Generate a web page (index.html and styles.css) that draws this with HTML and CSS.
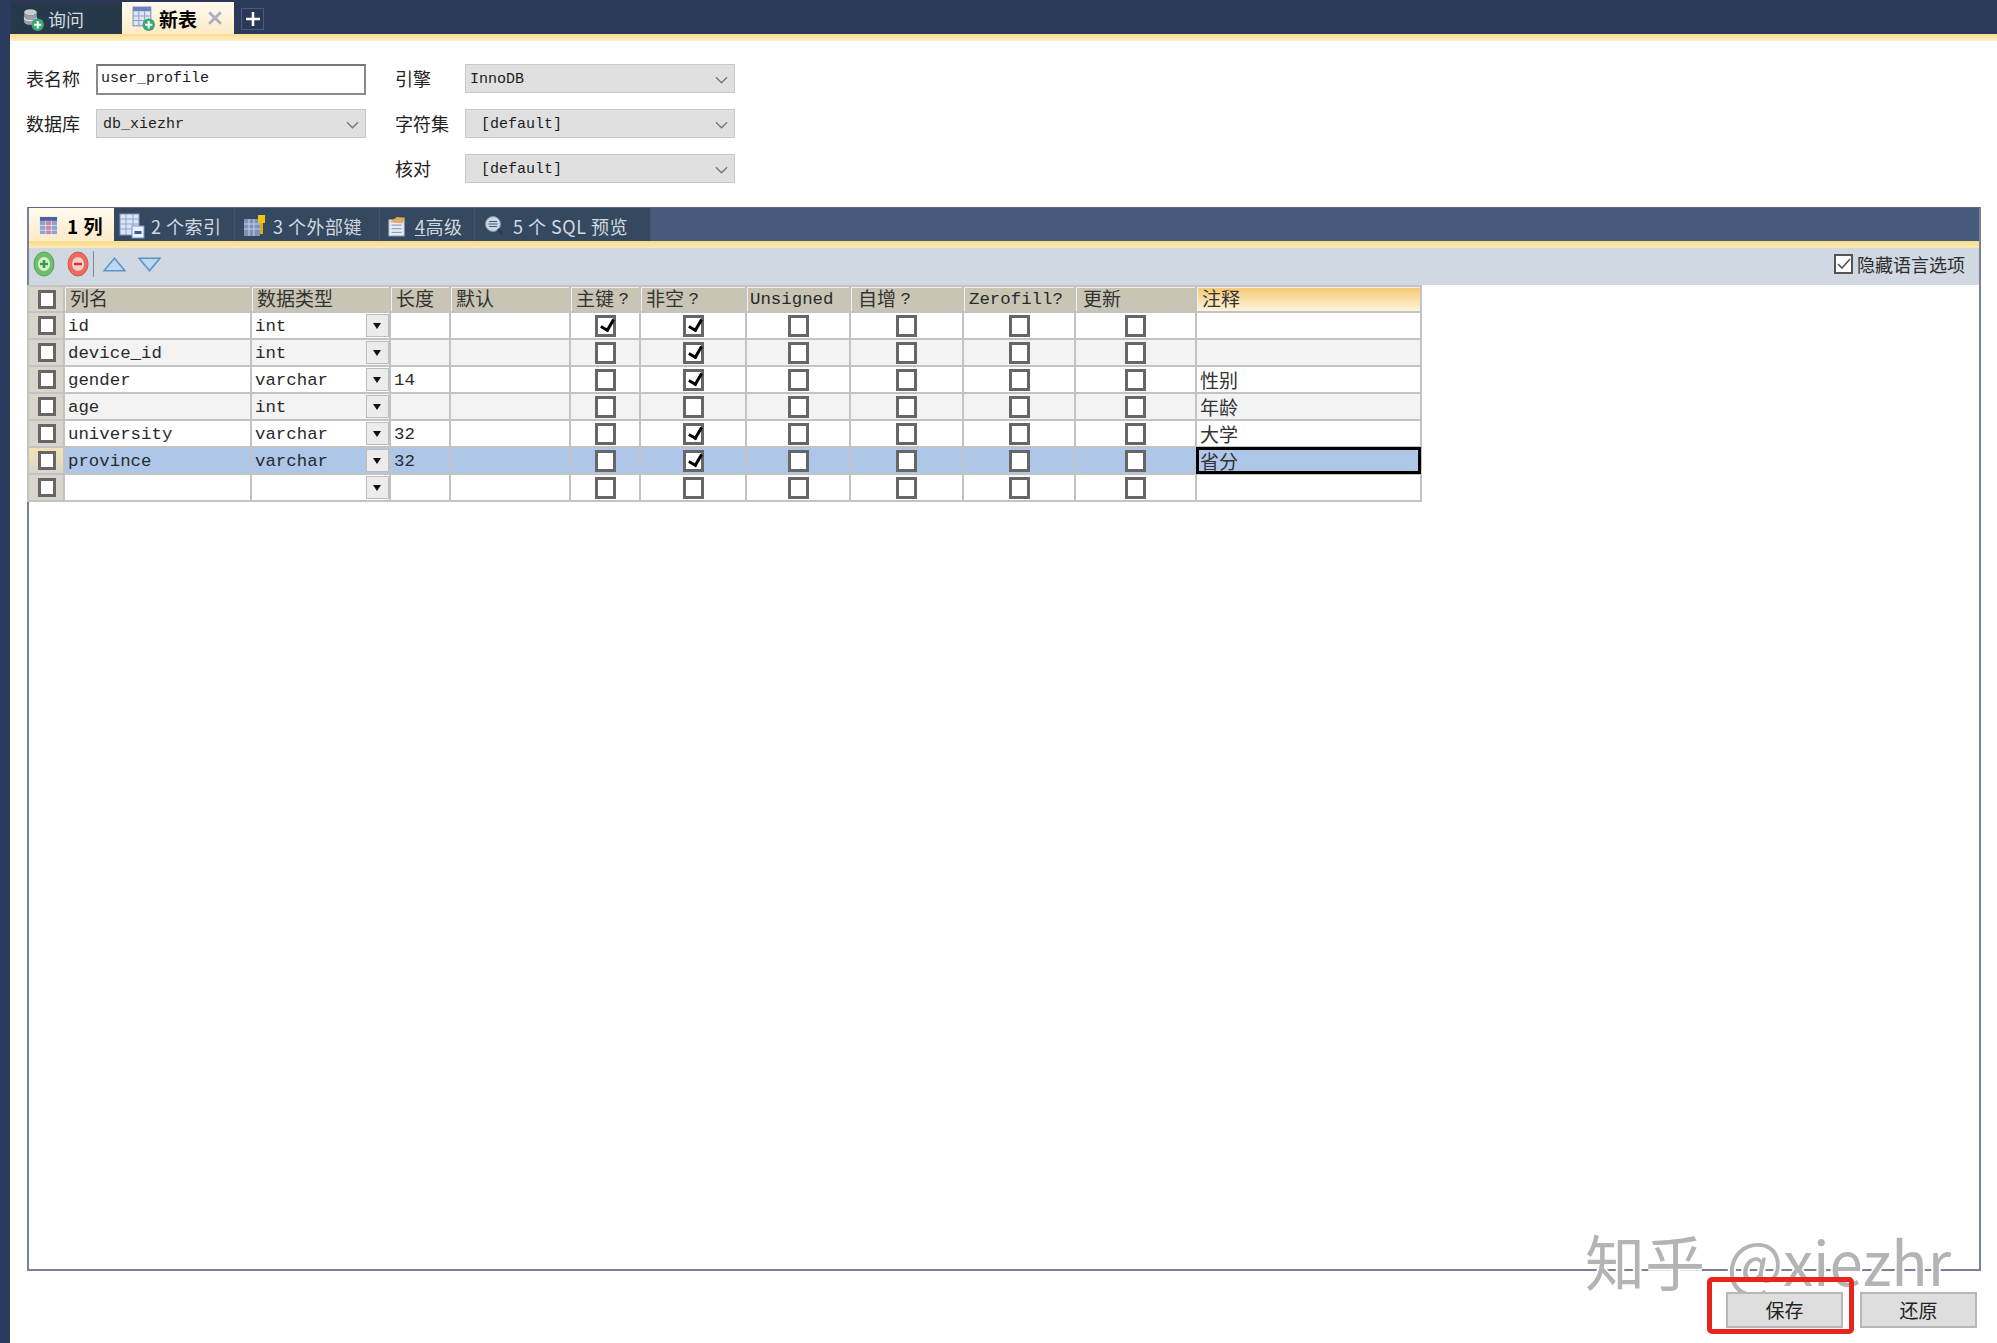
FILE: index.html
```html
<!DOCTYPE html>
<html lang="zh-CN">
<head>
<meta charset="utf-8">
<title>新表</title>
<link rel="stylesheet" href="styles.css">
</head>
<body>
<div class="app">
  <aside class="edge"></aside>
  <main class="main">
    <nav class="doc-tabs">
      <div class="doc-tab doc-tab-idle">
        <svg class="ico-doc" viewBox="0 0 22 24"><ellipse cx="9" cy="6" rx="6" ry="3" fill="#c9ced2"/><path d="M3 6v9c0 2 3 3 6 3s6-1 6-3V6c0 2-3 3-6 3S3 8 3 6z" fill="#9aa2a8"/><path d="M3 11c0 2 3 3 6 3s6-1 6-3" stroke="#e4e7ea" fill="none"/><circle cx="16" cy="18" r="6" fill="#3aa776"/><path d="M16 14.5v7M12.500 18h7" stroke="#fff" stroke-width="2"/></svg>
        <span>询问</span>
      </div>
      <div class="doc-tab doc-tab-on">
        <svg class="ico-doc" viewBox="0 0 22 24"><rect x="1" y="1" width="17" height="18" fill="#dfe6f3" stroke="#7c8fc0"/><rect x="1" y="1" width="17" height="4" fill="#6d83c0"/><path d="M6.500 5v14M12 5v14M1 9.500h17M1 14h17" stroke="#8ea2d0"/><circle cx="16" cy="18" r="6" fill="#3aa776"/><path d="M16 14.500v7M12.500 18h7" stroke="#fff" stroke-width="2"/></svg>
        <b class="doc-tab-title">新表</b>
        <svg class="doc-close" viewBox="0 0 12 12"><path d="M1 1l10 10M11 1L1 11" stroke="#a9b2c4" stroke-width="2.500"/></svg>
      </div>
      <button class="doc-add" type="button"><svg viewBox="0 0 14 14"><path d="M7 0v14M0 7h14" stroke="#fff" stroke-width="2.500"/></svg></button>
    </nav>
    <div class="strip"></div>

    <form class="meta">
      <label class="lbl">表名称</label>
      <div class="field field-input">user_profile</div>
      <label class="lbl lbl-r">引擎</label>
      <div class="field combo combo-a"><span>InnoDB</span><svg viewBox="0 0 14 8"><path d="M1 1l6 6 6-6" fill="none" stroke="#777" stroke-width="1.500"/></svg></div>

      <label class="lbl">数据库</label>
      <div class="field combo combo-b"><span>db_xiezhr</span><svg viewBox="0 0 14 8"><path d="M1 1l6 6 6-6" fill="none" stroke="#777" stroke-width="1.500"/></svg></div>
      <label class="lbl lbl-r">字符集</label>
      <div class="field combo combo-in"><span>[default]</span><svg viewBox="0 0 14 8"><path d="M1 1l6 6 6-6" fill="none" stroke="#777" stroke-width="1.500"/></svg></div>

      <span></span><span></span>
      <label class="lbl lbl-r">核对</label>
      <div class="field combo combo-in"><span>[default]</span><svg viewBox="0 0 14 8"><path d="M1 1l6 6 6-6" fill="none" stroke="#777" stroke-width="1.500"/></svg></div>
    </form>

    <section class="panel">
      <nav class="ptabs">
        <div class="ptab ptab-on w1">
          <svg class="ico19" viewBox="0 0 20 20"><rect x="1" y="1" width="18" height="18" fill="#8fa2d6"/><rect x="1" y="1" width="18" height="4" fill="#4d5f9c"/><rect x="7" y="5" width="6" height="14" fill="#c98aa0"/><path d="M7 5v14M13 5v14M1 10h18M1 15h18" stroke="#eef" stroke-width=".7"/></svg>
          <b>1 列</b>
        </div>
        <div class="ptab w2">
          <svg class="ico26" viewBox="0 0 26 26"><rect x="1" y="1" width="19" height="21" fill="#dfe6f2" stroke="#7b93c4"/><path d="M1 6h19M1 11h19M1 16h19M7 1v21M14 1v21" stroke="#8ba2cf"/><rect x="13" y="13" width="12" height="12" fill="#eef2f8" stroke="#7b93c4"/><rect x="15.500" y="18" width="7" height="3" fill="#2d5fa8"/></svg>
          <span>2 个索引</span>
        </div>
        <div class="ptab w3">
          <svg class="ico24" viewBox="0 0 24 24"><rect x="1" y="5" width="16" height="17" fill="#7d93b8"/><path d="M6 5v17M11 5v17M1 10h16M1 15h16" stroke="#c4d0e2"/><rect x="15" y="1" width="7" height="8" fill="#f0c419"/><rect x="17" y="9" width="3" height="11" fill="#e0ad10"/></svg>
          <span>3 个外部键</span>
        </div>
        <div class="ptab w4">
          <svg class="ico22" viewBox="0 0 22 24"><rect x="2" y="5" width="17" height="18" fill="#e8ebf0" stroke="#8a9ab5"/><path d="M5 11h11M5 15h11M5 19h11" stroke="#6f88b5"/><path d="M3 8l8-6 9 1-3 6z" fill="#e0a95c"/></svg>
          <span><u>4</u>高级</span>
        </div>
        <div class="ptab w5">
          <svg class="ico20" viewBox="0 0 20 22"><circle cx="9" cy="9" r="7.500" fill="#cfd6df" stroke="#8794a5"/><path d="M5 6.500h8M4.500 9h9M5 11.500h8" stroke="#3f5a8a" stroke-width="1.200"/><path d="M14 14l4 5" stroke="#2c3c50" stroke-width="2.500"/></svg>
          <span>5 个 SQL 预览</span>
        </div>
      </nav>
      <div class="strip strip-thin"></div>
      <div class="tools">
        <svg class="tool" viewBox="0 0 22 26"><ellipse cx="11" cy="13" rx="10" ry="12" fill="#6cc06a" stroke="#5a9e5a"/><ellipse cx="11" cy="13" rx="6" ry="7" fill="#d8f0d2"/><path d="M11 9v8M7 13h8" stroke="#3d9a45" stroke-width="2.500"/></svg>
        <svg class="tool" viewBox="0 0 22 26"><ellipse cx="11" cy="13" rx="10" ry="12" fill="#ee6a5e" stroke="#cc5a50"/><ellipse cx="11" cy="13" rx="6" ry="7" fill="#f8cfc8"/><path d="M7 13h8" stroke="#d0392e" stroke-width="2.500"/></svg>
        <i class="tool-sep"></i>
        <svg class="tool-arrow" viewBox="0 0 22 14"><path d="M11 1l10 12H1z" fill="#bcd8f2" stroke="#5b94c8" stroke-width="1.500"/></svg>
        <svg class="tool-arrow" viewBox="0 0 22 14"><path d="M11 13L21 1H1z" fill="#bcd8f2" stroke="#5b94c8" stroke-width="1.500"/></svg>
        <label class="hide-lang"><span class="hide-box"><svg viewBox="0 0 14 12"><path d="M1 6l4 4 8-9" fill="none" stroke="#555" stroke-width="1.600"/></svg></span>隐藏语言选项</label>
      </div>

      <table class="grid">
        <colgroup>
          <col class="c0"><col class="c1"><col class="c2"><col class="c3"><col class="c4"><col class="c5"><col class="c6"><col class="c7"><col class="c8"><col class="c9"><col class="c10"><col class="c11">
        </colgroup>
        <thead>
          <tr>
            <th class="rh"><i class="cb"></i></th>
            <th><span class="cn">列名</span></th>
            <th><span class="cn">数据类型</span></th>
            <th><span class="cn">长度</span></th>
            <th><span class="cn">默认</span></th>
            <th><span class="cn">主键</span> ?</th>
            <th><span class="cn">非空</span> ?</th>
            <th class="th-tight">Unsigned</th>
            <th class="th-wide"><span class="cn">自增</span> ?</th>
            <th>Zerofill?</th>
            <th class="th-wide"><span class="cn">更新</span></th>
            <th class="th-sort"><span class="cn">注释</span></th>
          </tr>
        </thead>
        <tbody>
          <tr>
            <td class="rh"><i class="cb"></i></td><td>id</td>
            <td class="ty">int<i class="dd"></i></td><td></td><td></td>
            <td class="ck"><i class="cb on"></i></td><td class="ck"><i class="cb on"></i></td>
            <td class="ck"><i class="cb"></i></td><td class="ck"><i class="cb"></i></td><td class="ck"><i class="cb"></i></td><td class="ck"><i class="cb"></i></td><td></td>
          </tr>
          <tr>
            <td class="rh"><i class="cb"></i></td><td>device_id</td>
            <td class="ty">int<i class="dd"></i></td><td></td><td></td>
            <td class="ck"><i class="cb"></i></td><td class="ck"><i class="cb on"></i></td>
            <td class="ck"><i class="cb"></i></td><td class="ck"><i class="cb"></i></td><td class="ck"><i class="cb"></i></td><td class="ck"><i class="cb"></i></td><td></td>
          </tr>
          <tr>
            <td class="rh"><i class="cb"></i></td><td>gender</td>
            <td class="ty">varchar<i class="dd"></i></td><td>14</td><td></td>
            <td class="ck"><i class="cb"></i></td><td class="ck"><i class="cb on"></i></td>
            <td class="ck"><i class="cb"></i></td><td class="ck"><i class="cb"></i></td><td class="ck"><i class="cb"></i></td><td class="ck"><i class="cb"></i></td><td><span class="cn">性别</span></td>
          </tr>
          <tr>
            <td class="rh"><i class="cb"></i></td><td>age</td>
            <td class="ty">int<i class="dd"></i></td><td></td><td></td>
            <td class="ck"><i class="cb"></i></td><td class="ck"><i class="cb"></i></td>
            <td class="ck"><i class="cb"></i></td><td class="ck"><i class="cb"></i></td><td class="ck"><i class="cb"></i></td><td class="ck"><i class="cb"></i></td><td><span class="cn">年龄</span></td>
          </tr>
          <tr>
            <td class="rh"><i class="cb"></i></td><td>university</td>
            <td class="ty">varchar<i class="dd"></i></td><td>32</td><td></td>
            <td class="ck"><i class="cb"></i></td><td class="ck"><i class="cb on"></i></td>
            <td class="ck"><i class="cb"></i></td><td class="ck"><i class="cb"></i></td><td class="ck"><i class="cb"></i></td><td class="ck"><i class="cb"></i></td><td><span class="cn">大学</span></td>
          </tr>
          <tr class="sel">
            <td class="rh"><i class="cb"></i></td><td>province</td>
            <td class="ty">varchar<i class="dd"></i></td><td>32</td><td></td>
            <td class="ck"><i class="cb"></i></td><td class="ck"><i class="cb on"></i></td>
            <td class="ck"><i class="cb"></i></td><td class="ck"><i class="cb"></i></td><td class="ck"><i class="cb"></i></td><td class="ck"><i class="cb"></i></td><td class="cur"><span class="cn">省分</span></td>
          </tr>
          <tr>
            <td class="rh"><i class="cb"></i></td><td></td>
            <td class="ty"><i class="dd"></i></td><td></td><td></td>
            <td class="ck"><i class="cb"></i></td><td class="ck"><i class="cb"></i></td>
            <td class="ck"><i class="cb"></i></td><td class="ck"><i class="cb"></i></td><td class="ck"><i class="cb"></i></td><td class="ck"><i class="cb"></i></td><td></td>
          </tr>
        </tbody>
      </table>
    </section>

    <footer class="actions">
      <div class="watermark">知乎 @xiezhr</div>
      <button class="btn" type="button">保存<i class="mark"></i></button>
      <button class="btn" type="button">还原</button>
    </footer>
  </main>
</div>
</body>
</html>
```
FILE: styles.css
```css
* { box-sizing: border-box; }
html, body { margin: 0; padding: 0; background: #fff; }
body {
  width: 1997px;
  height: 1343px;
  overflow: hidden;
  font-family: "Liberation Mono", "Noto Sans CJK SC", monospace;
  color: #222;
}
.app { display: flex; height: 100%; }
.edge { width: 10px; background: #2b3b5e; flex: none; }
.main { flex: 1; display: flex; flex-direction: column; min-width: 0; position: relative; }

/* document tabs */
.doc-tabs {
  height: 34px;
  background: #2b3858;
  display: flex;
  align-items: flex-end;
  padding-left: 1px;
  font-family: "Noto Sans CJK SC", sans-serif;
}
.doc-tab { display: flex; align-items: center; height: 31px; }
.doc-tab-idle { width: 111px; background: #25394a; color: #d6dade; font-size: 18px; padding-left: 10px; gap: 4px; }
.doc-tab-on {
  width: 112px; height: 32px; padding-left: 10px; gap: 4px;
  background: linear-gradient(#fffaf0, #fdebc6);
  color: #000;
  font-size: 19px;
}
.doc-tab-title { font-weight: 700; }
.doc-close { width: 14px; height: 14px; margin-left: 7px; }
.doc-add {
  width: 23px; height: 22px; margin: 0 0 4px 7px; padding: 0;
  background: #2b3858; border: 1px solid #4a5a80;
  display: flex; align-items: center; justify-content: center;
}
.doc-add svg { width: 14px; height: 14px; }
.strip { height: 7px; background: linear-gradient(#fbdc8e, #fdf0cc); flex: none; }
.strip-thin { background: linear-gradient(#f9dc8c, #fce9b4); }
.ico-doc { width: 23px; height: 25px; flex: none; }
.ico19 { width: 19px; height: 19px; flex: none; }
.ico20 { width: 20px; height: 22px; flex: none; }
.ico22 { width: 20px; height: 22px; flex: none; }
.ico24 { width: 24px; height: 24px; flex: none; }
.ico26 { width: 26px; height: 26px; flex: none; }

/* table meta form */
.meta {
  margin: 23px 0 0 16px;
  display: grid;
  grid-template-columns: 70px 270px 99px 270px;
  grid-auto-rows: 29px;
  row-gap: 16px;
  align-items: start;
}
.lbl { font-family: "Noto Sans CJK SC", sans-serif; font-size: 18px; line-height: 29px; color: #222; }
.lbl-r { padding-left: 29px; }
.field {
  height: 29px;
  display: flex; align-items: center;
  font-size: 15px;
  color: #1c1c1c;
}
.field-input { height: 31px; background: #fff; border: 2px solid #8a8a8a; border-top-color: #777; padding: 0 0 3px 3px; }
.combo { background: #e0e0e0; border: 1px solid #c8c8c8; justify-content: space-between; padding: 2px 6px 0 0; }
.combo svg { width: 13px; height: 8px; }
.combo-a { padding-left: 4px; }
.combo-b { padding-left: 6px; }
.combo-in { padding-left: 15px; }

/* panel */
.panel {
  margin: 24px 0 0 17px;
  width: 1954px;
  height: 1064px;
  border: 2px solid #77829a;
  border-top: 1px solid #5c6a84;
  display: flex; flex-direction: column;
  background: #fff;
}
.ptabs {
  height: 33px; flex: none;
  background: #465a7c;
  display: flex;
  font-family: "Noto Sans CJK SC", sans-serif;
  font-size: 18px;
  letter-spacing: .5px;
  color: #d3d8df;
}
.ptab { display: flex; align-items: center; height: 100%; background: #34495f; border-right: 1px solid #41566c; gap: 6px; padding-top: 2px; }
.ptab-on { background: linear-gradient(#fffaf0, #fdebc6); color: #000; border: 0; gap: 9px; }
.ptab-on b { font-size: 19px; }
.w1 { width: 85px; padding-left: 10px; }
.w2 { width: 121px; padding-left: 5px; }
.w3 { width: 145px; padding-left: 8px; }
.w4 { width: 95px; padding-left: 7px; gap: 8px; }
.w5 { width: 176px; padding-left: 9px; gap: 9px; }

.tools {
  height: 37px; flex: none;
  background: #d0d8e2;
  display: flex; align-items: center;
  padding: 0 0 5px 4px;
}
.tool { width: 22px; height: 26px; margin-right: 12px; }
.tool-sep { width: 1px; height: 26px; background: #7d8a9c; margin: 0 9px 0 -8px; }
.tool-arrow { width: 23px; height: 15px; margin-right: 12px; }
.hide-lang {
  margin-left: auto; margin-right: 14px;
  display: flex; align-items: center; gap: 4px;
  font-family: "Noto Sans CJK SC", sans-serif;
  font-size: 18px; color: #2c2c2c;
}
.hide-box {
  width: 19px; height: 20px; border: 2px solid #555; background: #fff;
  display: flex; align-items: center; justify-content: center;
}
.hide-box svg { width: 14px; height: 12px; }

/* grid */
.grid { border-collapse: collapse; table-layout: fixed; width: 1393px; margin-left: -2px; font-size: 17.4px; line-height: 20px; }
.c0 { width: 36px; } .c1 { width: 187px; } .c2 { width: 139px; } .c3 { width: 60px; }
.c4 { width: 120px; } .c5 { width: 70px; } .c6 { width: 106px; } .c7 { width: 104px; }
.c8 { width: 113px; } .c9 { width: 112px; } .c10 { width: 121px; } .c11 { width: 225px; }
.grid th, .grid td {
  height: 27px; padding: 3px 0 0 3px;
  border: 2px solid #c3c3c3;
  white-space: nowrap;
  text-align: left; font-weight: 400;
  color: #2a2a2a;
}
.grid th { height: 26px; background: #c9c5b5; padding: 1px 0 0 5px; box-shadow: inset 1px 1px 0 #f2f0e8; word-spacing: -6px; }
.grid .th-tight { padding-left: 3px; }
.grid .th-wide { padding-left: 7px; }
.grid .th-sort { background: linear-gradient(#f6c871, #fdf4dc); }
.grid .rh { background: #d8d6cc; padding: 0 0 0 1px; box-shadow: none; }
.grid tbody tr:nth-child(even) td { background: #f3f3f3; }
.grid tbody tr:nth-child(even) td.rh { background: #d8d6cc; }
.grid tbody tr.sel td { background: #aec6e8; }
.grid tbody tr.sel td.rh { background: linear-gradient(#f3e3b6, #d8d6cc); }
.grid tbody tr.sel td.cur { position: relative; }
.grid tbody tr.sel td.cur::after {
  content: ""; position: absolute; inset: -1px;
  border: 3px solid #000;
}
.grid .ck { padding: 0; }
.cn { font-family: "Noto Sans CJK SC", sans-serif; font-size: 19px; line-height: 20px; color: #333; }
td .cn { display: block; height: 20px; margin-top: -2px; }
th .cn { display: inline-block; height: 20px; vertical-align: top; margin-top: -2px; }
.cb {
  display: block; position: relative;
  width: 21px; height: 22px; margin: 0 auto;
  background: #fff; border: 3px solid #666;
}
.rh .cb { width: 18px; height: 19px; }
.cb.on::after {
  content: ""; position: absolute; left: 5px; top: -1px;
  width: 6px; height: 11px;
  border: solid #000; border-width: 0 3px 3px 0;
  transform: rotate(30deg);
}
.ty { position: relative; }
.dd {
  position: absolute; right: 0; top: 1px;
  width: 23px; height: 23px;
  background: #ececec; border: 1px solid #bdbdbd;
}
.dd::after {
  content: ""; position: absolute; left: 6px; top: 8px;
  border: 4px solid transparent; border-top: 6px solid #111; border-bottom: 0;
}

/* footer */
.actions {
  position: relative;
  display: flex; justify-content: flex-end; gap: 17px;
  margin-top: 21px;
  padding-right: 20px;
}
.btn {
  position: relative;
  width: 117px; height: 36px;
  background: #dedede;
  border: 2px solid #b8b8b8;
  font-family: "Noto Sans CJK SC", sans-serif;
  font-size: 19px; color: #222;
  padding: 0 0 2px;
}
.mark {
  position: absolute; left: -21px; right: -13px; top: -17px; bottom: -8px;
  border: 5px solid #e8251d; border-radius: 5px;
}
.watermark {
  position: absolute; left: 1575px; top: -67px;
  font-family: "Noto Sans CJK SC", sans-serif;
  font-size: 60px; line-height: 70px;
  word-spacing: 8px;
  white-space: nowrap;
  color: #b4b4b4;
  text-shadow: 2px 0 0 #fff, -2px 0 0 #fff, 0 2px 0 #fff, 0 -2px 0 #fff;
}
```
